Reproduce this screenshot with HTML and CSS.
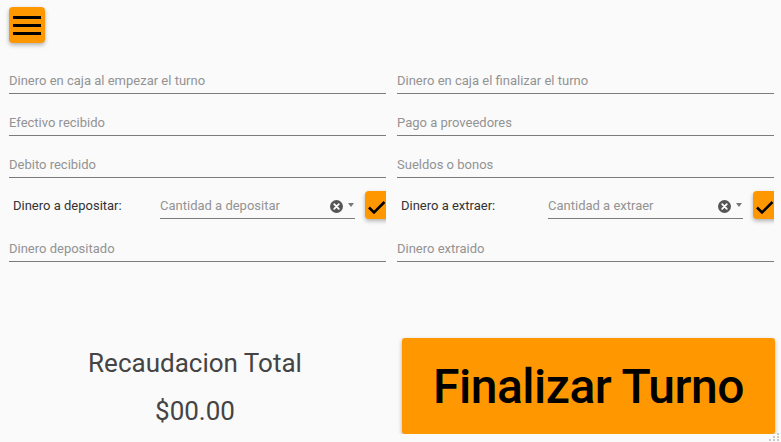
FILE: index.html
```html
<!DOCTYPE html>
<html lang="es">
<head>
<meta charset="utf-8">
<title>Turno</title>
<link rel="stylesheet" href="styles.css">
</head>
<body>
<header class="topbar">
  <button class="menu-btn" aria-label="Menu">
    <svg width="28" height="19" viewBox="0 0 28 19"><rect x="0" y="0" width="28" height="3" fill="#000"/><rect x="0" y="8" width="28" height="3" fill="#000"/><rect x="0" y="16" width="28" height="3" fill="#000"/></svg>
  </button>
</header>
<main class="form">
  <div class="col">
    <div class="field"><span>Dinero en caja al empezar el turno</span></div>
    <div class="field"><span>Efectivo recibido</span></div>
    <div class="field"><span>Debito recibido</span></div>
    <div class="select-row">
      <span class="row-label">Dinero a depositar:</span>
      <div class="select">
        <span class="placeholder">Cantidad a depositar</span>
        <svg class="clear" width="13" height="13" viewBox="0 0 13 13"><circle cx="6.5" cy="6.5" r="6.5" fill="#555"/><path d="M4.2 4.2L8.8 8.8M8.8 4.2L4.2 8.8" stroke="#fff" stroke-width="1.8" stroke-linecap="round"/></svg>
        <span class="arrow"></span>
      </div>
      <button class="check-btn" aria-label="Confirmar"><svg width="24" height="28" viewBox="0 0 24 28"><path d="M4 16.5L9 21.5L19.5 11" fill="none" stroke="#000" stroke-width="2.5"/></svg></button>
    </div>
    <div class="field"><span>Dinero depositado</span></div>
  </div>
  <div class="col">
    <div class="field"><span>Dinero en caja el finalizar el turno</span></div>
    <div class="field"><span>Pago a proveedores</span></div>
    <div class="field"><span>Sueldos o bonos</span></div>
    <div class="select-row">
      <span class="row-label">Dinero a extraer:</span>
      <div class="select">
        <span class="placeholder">Cantidad a extraer</span>
        <svg class="clear" width="13" height="13" viewBox="0 0 13 13"><circle cx="6.5" cy="6.5" r="6.5" fill="#555"/><path d="M4.2 4.2L8.8 8.8M8.8 4.2L4.2 8.8" stroke="#fff" stroke-width="1.8" stroke-linecap="round"/></svg>
        <span class="arrow"></span>
      </div>
      <button class="check-btn" aria-label="Confirmar"><svg width="24" height="28" viewBox="0 0 24 28"><path d="M4 16.5L9 21.5L19.5 11" fill="none" stroke="#000" stroke-width="2.5"/></svg></button>
    </div>
    <div class="field"><span>Dinero extraido</span></div>
  </div>
</main>
<section class="summary">
  <div class="total">
    <div class="total-title">Recaudacion Total</div>
    <div class="total-amount">$00.00</div>
  </div>
  <div class="finish-wrap">
    <button class="finish-btn">Finalizar Turno</button>
  </div>
</section>
<svg class="grip" width="12" height="10" viewBox="0 0 12 10"><g fill="#c8c8c8"><rect x="9" y="1" width="2" height="2"/><rect x="5" y="4" width="2" height="2"/><rect x="9" y="4" width="2" height="2"/><rect x="1" y="7" width="2" height="2"/><rect x="5" y="7" width="2" height="2"/><rect x="9" y="7" width="2" height="2"/></g></svg>
</body>
</html>
```
FILE: styles.css
```css
html, body {
  margin: 0;
  background: #fafafa;
  font-family: Roboto, "Liberation Sans", sans-serif;
  overflow: hidden;
}

.topbar {
  padding: 7px 0 0 9px;
  height: 36px;
}

.menu-btn {
  width: 36px;
  height: 36px;
  padding: 0;
  border: 0;
  border-radius: 4px;
  background: #ff9800;
  box-shadow: 0 2px 4px rgba(0, 0, 0, 0.3);
  display: flex;
  align-items: center;
  justify-content: center;
}

.form {
  display: grid;
  grid-template-columns: 377px 377px;
  column-gap: 11px;
  padding-left: 9px;
  margin-top: 9px;
}

.col {
  display: flex;
  flex-direction: column;
  overflow: hidden;
}

.field {
  height: 42px;
  box-sizing: border-box;
  border-bottom: 1px solid #7b7b7b;
  display: flex;
  align-items: flex-end;
  padding-bottom: 4px;
  font-size: 13px;
  line-height: 16px;
  color: #939393;
}

.select-row {
  height: 42px;
  display: flex;
  align-items: flex-end;
  font-size: 13px;
  line-height: 16px;
}

.row-label {
  width: 151px;
  flex-shrink: 0;
  box-sizing: border-box;
  padding-left: 4px;
  margin-bottom: 6px;
  color: #333;
}

.select {
  width: 195px;
  flex-shrink: 0;
  height: 28px;
  box-sizing: border-box;
  border-bottom: 1px solid #7b7b7b;
  display: flex;
  align-items: flex-end;
  padding-right: 1px;
  margin-bottom: 1px;
}

.placeholder {
  flex: 1;
  color: #939393;
  margin-bottom: 4px;
}

.clear {
  display: block;
  margin-bottom: 5px;
}

.arrow {
  width: 0;
  height: 0;
  margin-left: 5px;
  margin-bottom: 11px;
  border-left: 3.5px solid transparent;
  border-right: 3.5px solid transparent;
  border-top: 4px solid #777;
}

.check-btn {
  width: 40px;
  height: 28px;
  flex-shrink: 0;
  margin-left: 10px;
  margin-bottom: 1px;
  padding: 0;
  border: 0;
  border-radius: 4px;
  background: #ff9800;
  box-shadow: 0 2px 4px rgba(0, 0, 0, 0.3);
  display: flex;
  align-items: center;
}

.check-btn svg {
  display: block;
}

.summary {
  display: grid;
  grid-template-columns: 377px 377px;
  column-gap: 11px;
  padding-left: 9px;
  margin-top: 76px;
}

.total {
  text-align: center;
  padding-top: 9px;
  padding-right: 5px;
  color: #444;
}

.total-title {
  font-size: 26px;
  line-height: 32px;
}

.total-amount {
  font-size: 26px;
  line-height: 32px;
  margin-top: 16px;
}

.finish-wrap {
  padding-left: 5px;
}

.finish-btn {
  width: 373px;
  height: 96px;
  padding: 0;
  border: 0;
  border-radius: 3px;
  background: #ff9800;
  box-shadow: 0 2px 4px rgba(0, 0, 0, 0.3);
  font-family: Roboto, "Liberation Sans", sans-serif;
  font-size: 48px;
  font-weight: 500;
  letter-spacing: -0.5px;
  color: #000;
}

.grip {
  position: fixed;
  right: 1px;
  bottom: 0;
}
```
